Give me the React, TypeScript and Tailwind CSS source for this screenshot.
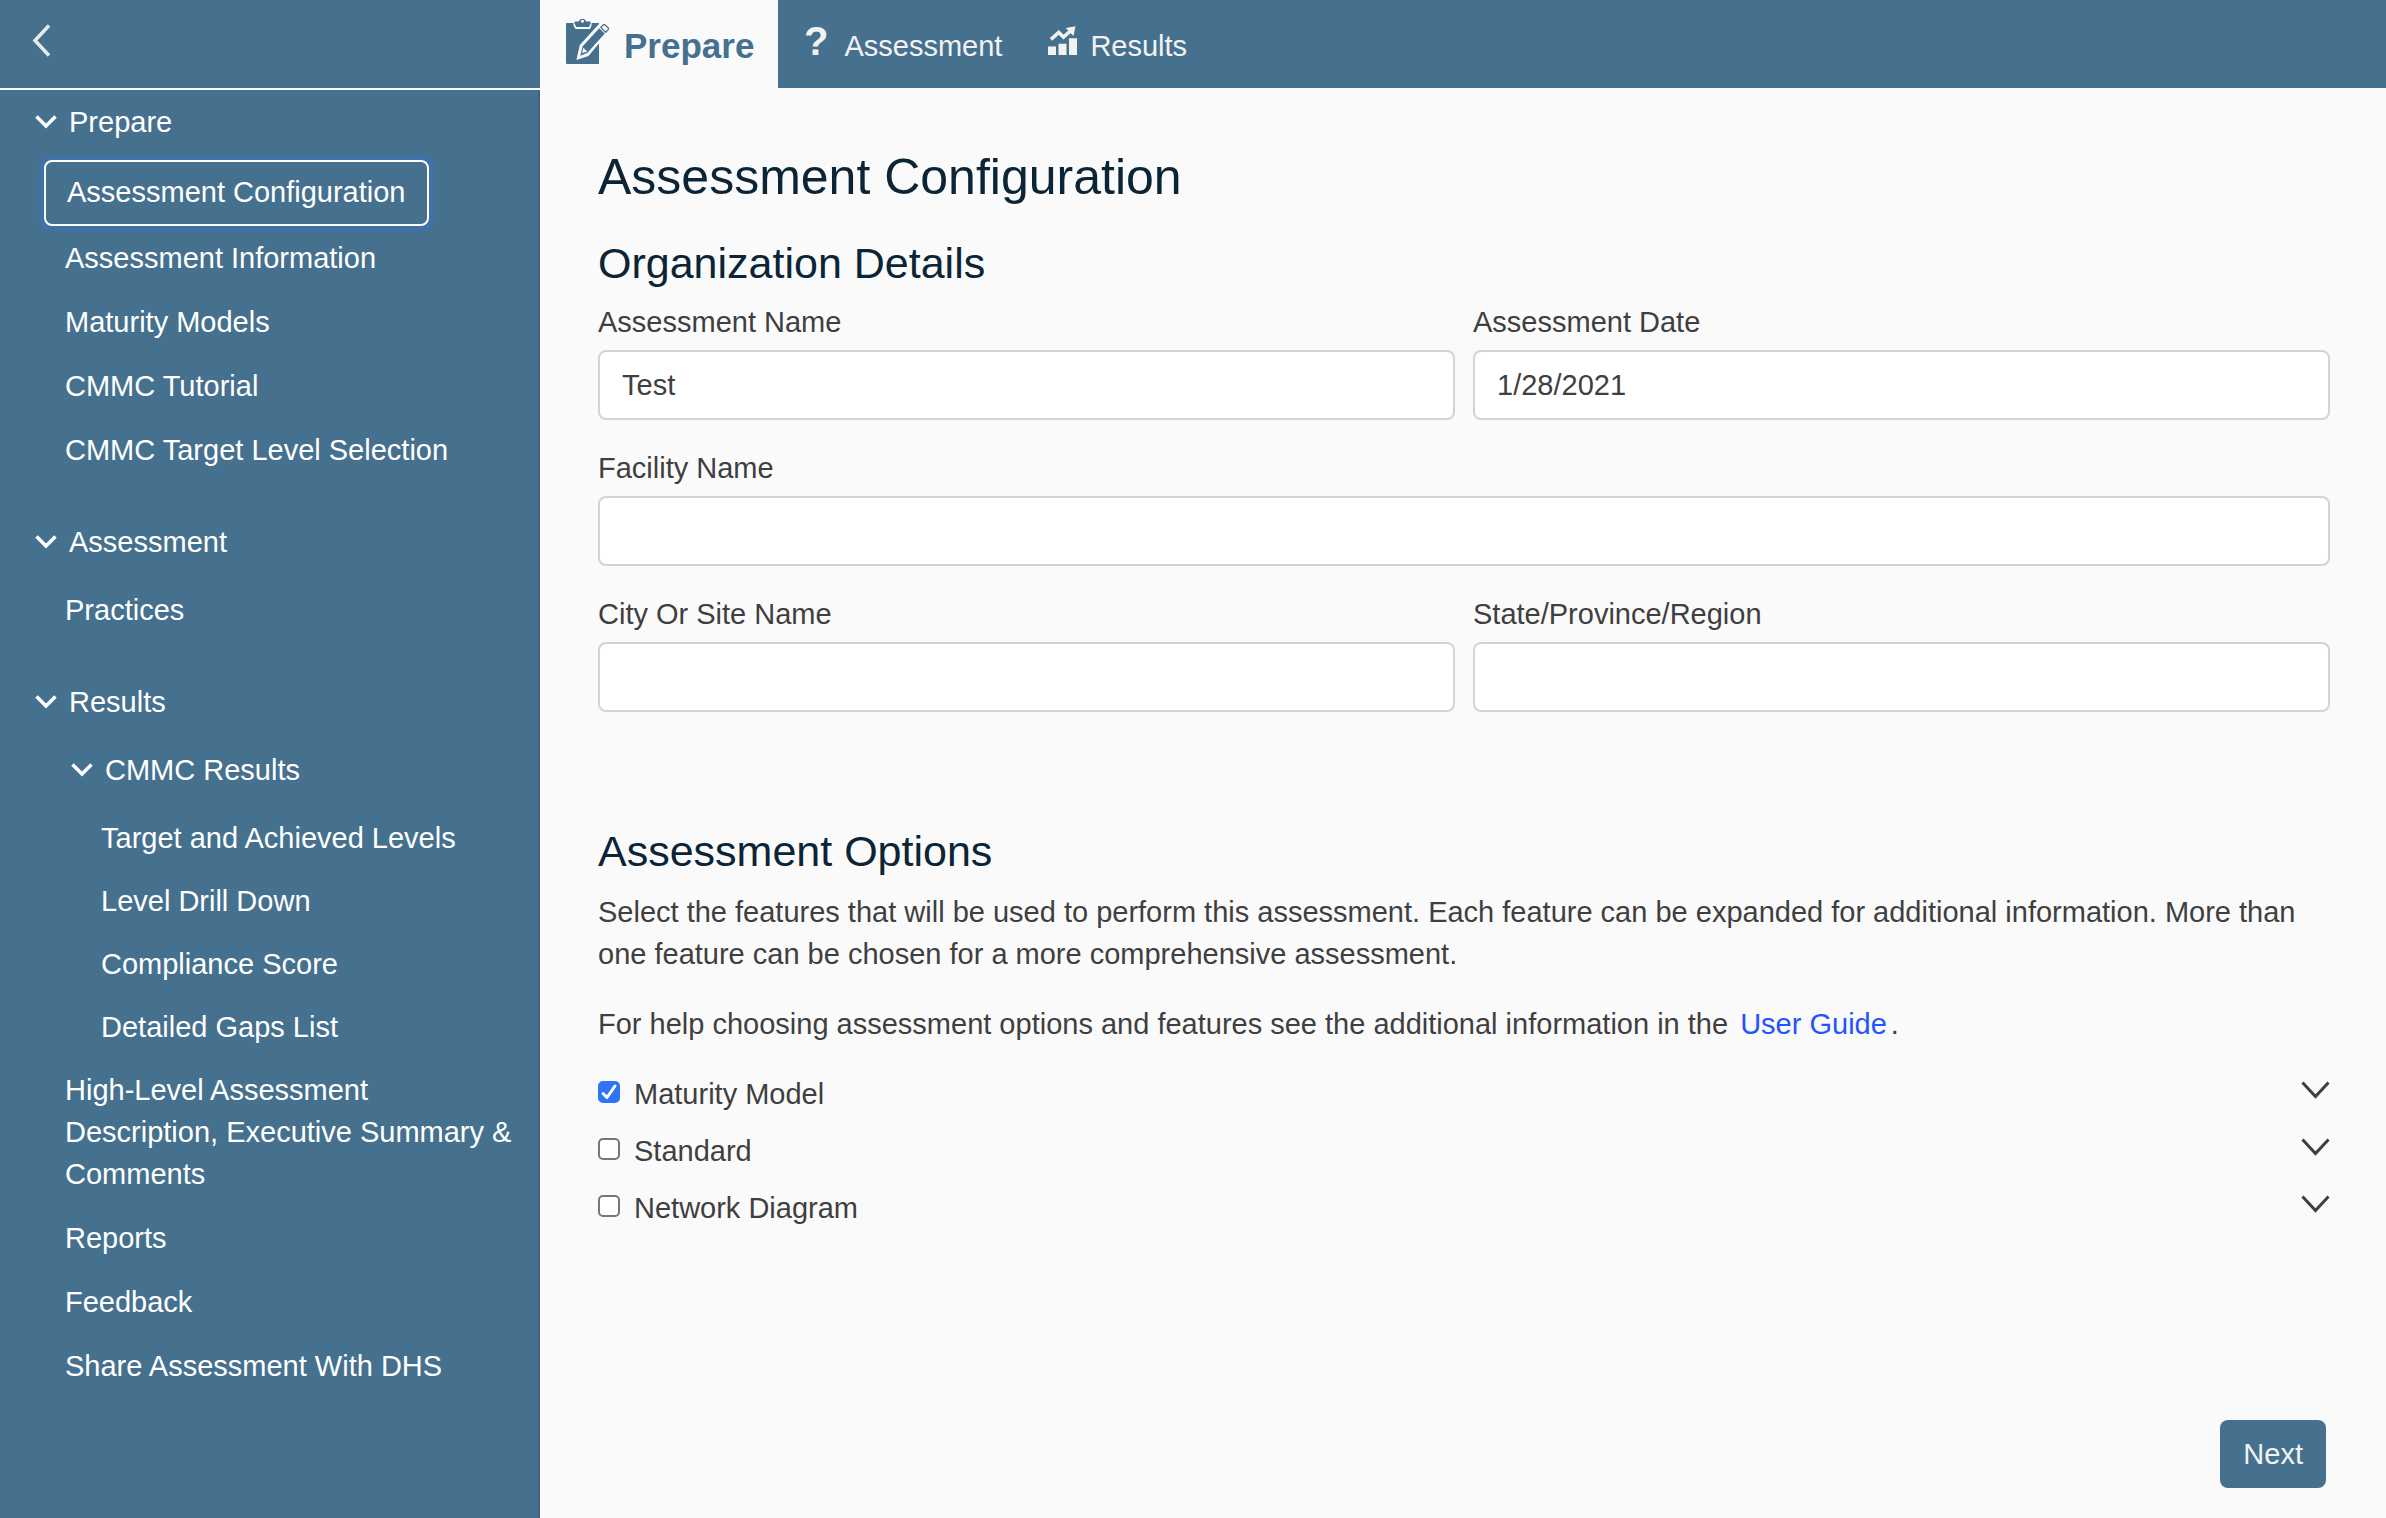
import { useState } from "react";

type NavItem = { label: string; kind: "group" | "leaf"; nested?: boolean; gap?: boolean; active?: boolean };

const navItems: NavItem[] = [
  { label: "Prepare", kind: "group" },
  { label: "Assessment Configuration", kind: "leaf", active: true },
  { label: "Assessment Information", kind: "leaf" },
  { label: "Maturity Models", kind: "leaf" },
  { label: "CMMC Tutorial", kind: "leaf" },
  { label: "CMMC Target Level Selection", kind: "leaf" },
  { label: "Assessment", kind: "group", gap: true },
  { label: "Practices", kind: "leaf" },
  { label: "Results", kind: "group", gap: true },
  { label: "CMMC Results", kind: "group", nested: true },
  { label: "Target and Achieved Levels", kind: "leaf", nested: true },
  { label: "Level Drill Down", kind: "leaf", nested: true },
  { label: "Compliance Score", kind: "leaf", nested: true },
  { label: "Detailed Gaps List", kind: "leaf", nested: true },
  { label: "High-Level Assessment Description, Executive Summary & Comments", kind: "leaf" },
  { label: "Reports", kind: "leaf" },
  { label: "Feedback", kind: "leaf" },
  { label: "Share Assessment With DHS", kind: "leaf" },
];

function GroupChevron() {
  return (
    <svg width="22" height="14" viewBox="0 0 22 14" fill="none" stroke="currentColor" strokeWidth="3.5" aria-hidden="true">
      <path d="M1.5 1.5 11 11 20.5 1.5" />
    </svg>
  );
}

function NavRow({ item }: { item: NavItem }) {
  if (item.kind === "group") {
    return (
      <li className={`${item.gap ? "mt-7" : ""} ${item.nested ? "pl-[71px]" : "pl-[35px]"}`}>
        <button type="button" aria-expanded="true" className="flex items-center gap-3 pt-2.5 pb-4 text-left">
          <GroupChevron />
          {item.label}
        </button>
      </li>
    );
  }
  if (item.active) {
    return (
      <li className="my-px pl-11">
        <button
          type="button"
          aria-current="page"
          className="rounded-lg border-2 border-white px-[21px] pt-[9px] pb-[11px] text-left shadow-[0_0_0_5px_#4171a9]"
        >
          {item.label}
        </button>
      </li>
    );
  }
  return (
    <li className={`${item.nested ? "pl-[101px]" : "pl-[65px]"} pr-6`}>
      <button type="button" className={`pt-2.5 text-left ${item.nested ? "pb-[11px]" : "pb-3"}`}>
        {item.label}
      </button>
    </li>
  );
}

function ClipboardIcon() {
  return (
    <svg width="44" height="46" viewBox="0 0 44 46" fill="none" aria-hidden="true">
      <path d="M1 5h32v41H1a1 1 0 0 1-1-1V6a1 1 0 0 1 1-1Z" fill="#45718f" />
      <path d="M7.500 4h18v3.500l-1.500 3.500H9.500L7.500 7.500Z" fill="#fafafa" />
      <path d="M8.500 3.500H13a3.600 3.600 0 0 1 7 0h4.500v2L23 9H10.300L8.500 5.500Z" fill="#45718f" />
      <circle cx="16.500" cy="3.300" r="1.500" fill="#fafafa" />
      <path d="M10.400 42 13.800 27 33 6l9 8.500L22.500 38Z" fill="#fafafa" />
      <path d="M34.800 9.200 37.200 6.900q.9-.8 1.900 0l3 2.800q.9.900.1 1.900l-2.500 2.800Z" fill="#fafafa" stroke="#45718f" strokeWidth="1.300" strokeLinejoin="round" />
      <path d="M33.200 10.300 38.800 15.600 21.500 34.800 14.200 37.700 16.700 28.200Z" fill="#45718f" />
      <path d="M17.300 29.800 21.300 33.600 16.200 35Z" fill="#fafafa" />
    </svg>
  );
}

function ChartIcon() {
  return (
    <svg width="30" height="30" viewBox="0 0 30 30" fill="currentColor" aria-hidden="true">
      <path d="M0 20.500h8V29H0zM10.500 17.700h8V29h-8zM21 12.300h8V29h-8z" />
      <path d="M3 13.300 10.700 6.500 15.500 11 22.500 5" fill="none" stroke="currentColor" strokeWidth="3.600" />
      <path d="M17.700 2 27.500.2 25.500 10Z" />
    </svg>
  );
}

function Field({ id, label, value, wide }: { id: string; label: string; value?: string; wide?: boolean }) {
  return (
    <div className={wide ? "col-span-2" : ""}>
      <label htmlFor={id} className="block">
        {label}
      </label>
      <input
        id={id}
        type="text"
        defaultValue={value}
        className="mt-[7px] block h-[70px] w-full rounded-lg border-2 border-[#ced4da] bg-white px-[22px]"
      />
    </div>
  );
}

function Option({ id, label, initial }: { id: string; label: string; initial?: boolean }) {
  const [checked, setChecked] = useState(!!initial);
  return (
    <div className="flex items-start pb-[15px]">
      <span className="relative mt-2 size-[22px]">
        <input
          id={id}
          type="checkbox"
          checked={checked}
          onChange={(e) => setChecked(e.target.checked)}
          className="block size-[22px] appearance-none rounded-[5px] border-2 border-[#767676] bg-white checked:border-[#2d75f6] checked:bg-[#2d75f6]"
        />
        {checked && (
          <svg
            className="pointer-events-none absolute inset-0"
            width="22"
            height="22"
            viewBox="0 0 22 22"
            fill="none"
            stroke="#fff"
            strokeWidth="3"
            strokeLinecap="round"
            strokeLinejoin="round"
            aria-hidden="true"
          >
            <path d="M5 12.500 9 16.500 17 5" />
          </svg>
        )}
      </span>
      <label htmlFor={id} className="ml-3.5">
        {label}
      </label>
      <button type="button" aria-label={`Expand ${label}`} className="mt-2 ml-auto">
        <svg width="29" height="18" viewBox="0 0 29 18" fill="none" stroke="currentColor" strokeWidth="3" aria-hidden="true">
          <path d="M1.500 1.500 14.500 15.500 27.500 1.500" />
        </svg>
      </button>
    </div>
  );
}

export default function App() {
  return (
    <div className="flex min-h-screen bg-[#fafafa] font-['Liberation_Sans',Arial,sans-serif] text-[29px] leading-[42px] text-[#3f3f3f]">
      <aside className="flex w-[540px] shrink-0 flex-col bg-[#45718f] text-white">
        <div className="flex h-[90px] shrink-0 items-start border-b-2 border-white pt-6 pl-8">
          <button type="button" aria-label="Collapse menu" className="text-[#e9e9e9]">
            <svg width="19" height="34" viewBox="0 0 19 34" fill="none" stroke="currentColor" strokeWidth="3.5" aria-hidden="true">
              <path d="M17 1.500 3 16.500 17 31.500" />
            </svg>
          </button>
        </div>
        <nav className="flex-1 border-r-2 border-[#3d647f] pt-px">
          <ul>
            {navItems.map((item) => (
              <NavRow key={item.label} item={item} />
            ))}
          </ul>
        </nav>
      </aside>

      <div className="flex min-w-0 flex-1 flex-col">
        <header className="flex h-[88px] bg-[#45718f] text-[#f2f2f2]">
          <button type="button" className="flex w-[238px] items-center gap-[14px] bg-[#fafafa] pt-1 pl-[26px] text-[35px] font-bold text-[#45718f]">
            <span className="mb-2.5">
              <ClipboardIcon />
            </span>
            Prepare
          </button>
          <button type="button" className="flex items-center gap-4 pt-1 pl-[26px]">
            <span className="mb-2.5 text-[40px] font-bold">?</span>
            Assessment
          </button>
          <button type="button" className="flex items-center gap-3 pt-1 pl-[46px]">
            <span className="mb-2.5">
              <ChartIcon />
            </span>
            Results
          </button>
        </header>

        <main className="flex flex-1 flex-col pt-[59px] pr-14 pb-[30px] pl-[58px]">
          <h1 className="text-[50px] leading-[60px] text-[#0b2436]">Assessment Configuration</h1>
          <h2 className="mt-[30px] text-[43px] leading-[52px] text-[#0b2436]">Organization Details</h2>
          <form className="mt-3 grid grid-cols-2 gap-x-[18px] gap-y-[27px]">
            <Field id="name" label="Assessment Name" value="Test" />
            <Field id="date" label="Assessment Date" value="1/28/2021" />
            <Field id="facility" label="Facility Name" wide />
            <Field id="city" label="City Or Site Name" />
            <Field id="state" label="State/Province/Region" />
          </form>

          <h2 className="mt-[113px] text-[43px] leading-[52px] text-[#0b2436]">Assessment Options</h2>
          <p className="mt-3.5">
            Select the features that will be used to perform this assessment. Each feature can be expanded for additional
            information. More than one feature can be chosen for a more comprehensive assessment.
          </p>
          <p className="my-7">
            For help choosing assessment options and features see the additional information in the{" "}
            <a href="#user-guide" className="mx-1 text-[#2453ff]">
              User Guide
            </a>
            .
          </p>
          <Option id="maturity" label="Maturity Model" initial />
          <Option id="standard" label="Standard" />
          <Option id="network" label="Network Diagram" />

          <button type="button" className="mt-auto mr-1 h-[68px] self-end rounded-lg bg-[#45718f] px-[23px] text-[#f2f2f2]">
            Next
          </button>
        </main>
      </div>
    </div>
  );
}
